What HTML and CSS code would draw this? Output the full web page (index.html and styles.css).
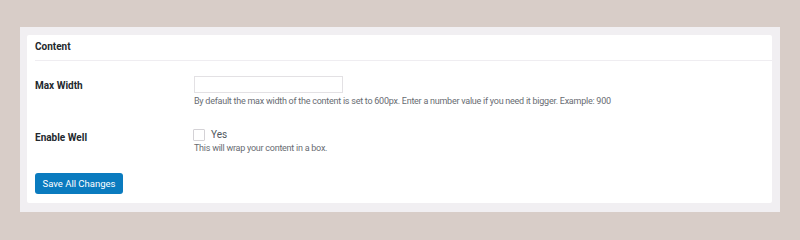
FILE: index.html
```html
<!DOCTYPE html>
<html lang="en">
<head>
    <meta charset="UTF-8">
    <meta name="viewport" content="width=device-width, initial-scale=1.0">
    <title>Content Settings</title>
    <link rel="stylesheet" href="styles.css">
</head>
<body>

    <div class="frame">
        <div class="card">
            <h2 class="card-title">Content</h2>

            <div class="row row-first">
                <label class="row-label" for="maxWidth">Max Width</label>
                <div class="row-field">
                    <input type="text" id="maxWidth" class="text-input">
                    <p class="help">By default the max width of the content is set to 600px. Enter a number value if you need it bigger. Example: 900</p>
                </div>
            </div>

            <div class="row">
                <span class="row-label">Enable Well</span>
                <div class="row-field">
                    <label class="check">
                        <input type="checkbox" class="check-box">
                        <span>Yes</span>
                    </label>
                    <p class="help">This will wrap your content in a box.</p>
                </div>
            </div>

            <button class="save-btn">Save All Changes</button>
        </div>
    </div>

</body>
</html>
```

FILE: styles.css
```css
body {
    margin: 0;
    background-color: #d8cdc8;
    font-family: Roboto, "Liberation Sans", sans-serif;
    color: #23282d;
}
.frame {
    margin: 27px 20px 0;
    padding: 8px 8px 9px 7px;
    background: #f1eff2;
}
.card {
    background: #fff;
    border-radius: 2px;
    padding-bottom: 9px;
}
.card-title {
    margin: 0 0 0 8px;
    padding-top: 4px;
    height: 21px;
    line-height: 15px;
    font-size: 10px;
    font-weight: bold;
    border-bottom: 1px solid #efedf1;
}
.row {
    display: grid;
    grid-template-columns: 159px 1fr;
    padding: 20px 0 0 8px;
}
.row-first {
    padding-top: 15px;
}
.row-label {
    margin-top: 1px;
    line-height: 18px;
    font-size: 10px;
    font-weight: bold;
}
.text-input {
    display: block;
    box-sizing: border-box;
    width: 149px;
    height: 17px;
    margin: 0;
    border: 1px solid #e3e1e4;
    background: #fff;
}
.help {
    margin: 1px 0 0;
    line-height: 14px;
    font-size: 9px;
    letter-spacing: -0.25px;
    color: #686c72;
}
.check {
    display: flex;
    align-items: center;
    gap: 6px;
    height: 12px;
    margin-top: 1px;
    line-height: 12px;
    font-size: 10px;
    color: #50575e;
}
.check-box {
    appearance: none;
    box-sizing: border-box;
    width: 12px;
    height: 12px;
    margin: 0 0 0 -1px;
    border: 1px solid #d4d2d6;
    border-radius: 1px;
    background: #fff;
}
.check + .help {
    margin-top: 0;
}
.save-btn {
    display: block;
    margin: 18px 0 0 8px;
    width: 88px;
    height: 21px;
    padding: 0;
    border: none;
    border-radius: 3px;
    background: #0a7bbf;
    color: #fff;
    font-family: Roboto, "Liberation Sans", sans-serif;
    font-size: 9.5px;
    cursor: pointer;
}
```
